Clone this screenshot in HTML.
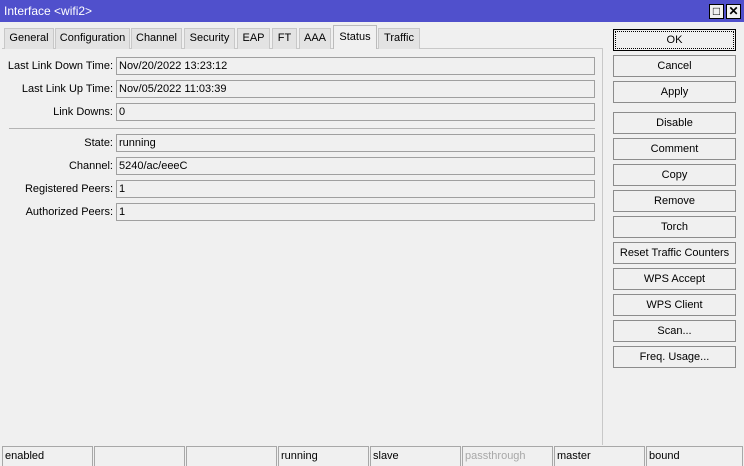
<!DOCTYPE html><html><head><style>
*{box-sizing:border-box;margin:0;padding:0}
body{width:744px;height:466px;background:#f0f0f0;font-family:"Liberation Sans",sans-serif;font-size:11px;color:#000;position:relative;overflow:hidden}
.a{position:absolute;white-space:nowrap}
.title{left:0;top:0;width:744px;height:22px;background:#5050cc;color:#fff;padding:4px 0 0 4px;font-size:12px}
.tb{top:4px;width:15px;height:15px;background:#f0f0f0;border:1px solid #000;font-size:12px;line-height:13px;text-align:center;font-weight:bold}
.tab{top:28px;height:21px;background:#e3e3e3;border:1px solid #c8c8c8;border-bottom:none;text-align:center;line-height:19px}
.tab.s{top:25px;height:24px;background:#f0f0f0;border-color:#bbb;line-height:22px}
.panel{left:2px;top:48px;width:601px;height:397px;border:1px solid #c8c8c8;border-bottom:none;border-left:none}
.lbl{left:0;width:113px;text-align:right;height:18px;line-height:18px}
.fld{left:116px;width:479px;height:18px;border:1px solid #a0a0a0;background:#f0f0f0;padding-left:2px;line-height:16px}
.btn{left:613px;width:123px;height:22px;border:1px solid #8c8c8c;background:#f0f0f0;text-align:center;line-height:20px}
.sb{top:446px;height:20px;border:1px solid #a8a8a8;border-bottom:none;padding-left:2px;line-height:19px}
</style></head><body>
<div class="a title">Interface &lt;wifi2&gt;</div>
<div class="a tb" style="left:709px">□</div>
<div class="a tb" style="left:726px">✕</div>
<div class="a panel"></div>
<div class="a tab" style="left:4px;width:50px">General</div>
<div class="a tab" style="left:55px;width:75px">Configuration</div>
<div class="a tab" style="left:131px;width:51px">Channel</div>
<div class="a tab" style="left:184px;width:51px">Security</div>
<div class="a tab" style="left:237px;width:33px">EAP</div>
<div class="a tab" style="left:272px;width:25px">FT</div>
<div class="a tab" style="left:299px;width:32px">AAA</div>
<div class="a tab s" style="left:333px;width:44px">Status</div>
<div class="a tab" style="left:378px;width:42px">Traffic</div>
<div class="a lbl" style="top:57px">Last Link Down Time:</div><div class="a fld" style="top:57px">Nov/20/2022 13:23:12</div>
<div class="a lbl" style="top:80px">Last Link Up Time:</div><div class="a fld" style="top:80px">Nov/05/2022 11:03:39</div>
<div class="a lbl" style="top:103px">Link Downs:</div><div class="a fld" style="top:103px">0</div>
<div class="a" style="left:9px;top:128px;width:586px;height:1px;background:#b4b4b4"></div>
<div class="a lbl" style="top:134px">State:</div><div class="a fld" style="top:134px">running</div>
<div class="a lbl" style="top:157px">Channel:</div><div class="a fld" style="top:157px">5240/ac/eeeC</div>
<div class="a lbl" style="top:180px">Registered Peers:</div><div class="a fld" style="top:180px">1</div>
<div class="a lbl" style="top:203px">Authorized Peers:</div><div class="a fld" style="top:203px">1</div>
<div class="a btn" style="top:29px;border:1px solid #000;outline:1px dotted #000;outline-offset:-3px">OK</div>
<div class="a btn" style="top:55px">Cancel</div>
<div class="a btn" style="top:81px">Apply</div>
<div class="a btn" style="top:112px">Disable</div>
<div class="a btn" style="top:138px">Comment</div>
<div class="a btn" style="top:164px">Copy</div>
<div class="a btn" style="top:190px">Remove</div>
<div class="a btn" style="top:216px">Torch</div>
<div class="a btn" style="top:242px">Reset Traffic Counters</div>
<div class="a btn" style="top:268px">WPS Accept</div>
<div class="a btn" style="top:294px">WPS Client</div>
<div class="a btn" style="top:320px">Scan...</div>
<div class="a btn" style="top:346px">Freq. Usage...</div>
<div class="a sb" style="left:2px;width:91px">enabled</div>
<div class="a sb" style="left:94px;width:91px"></div>
<div class="a sb" style="left:186px;width:91px"></div>
<div class="a sb" style="left:278px;width:91px">running</div>
<div class="a sb" style="left:370px;width:91px">slave</div>
<div class="a sb" style="left:462px;width:91px;color:#a8a8a8">passthrough</div>
<div class="a sb" style="left:554px;width:91px">master</div>
<div class="a sb" style="left:646px;width:97px">bound</div>
</body></html>
